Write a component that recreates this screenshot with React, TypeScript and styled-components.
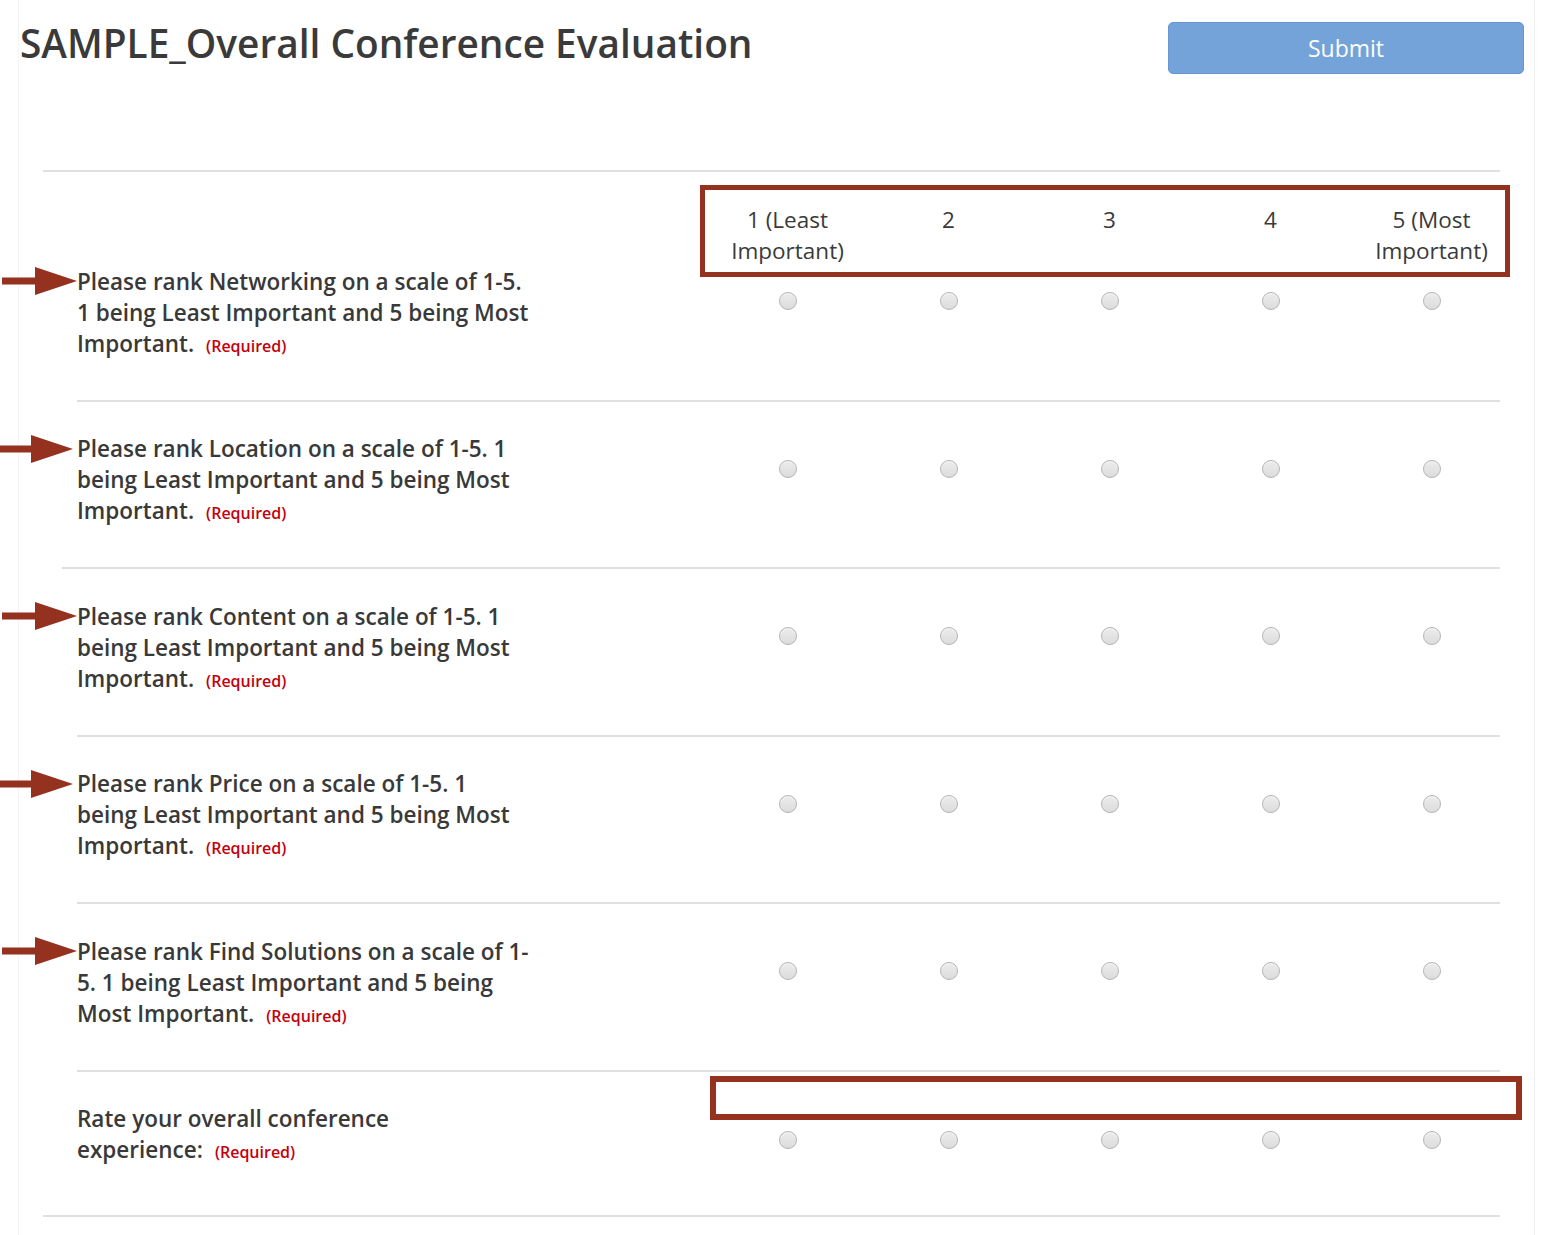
import React from 'react';
import styled, { createGlobalStyle } from 'styled-components';

const GlobalStyle = createGlobalStyle`
	html, body {
		margin: 0;
		padding: 0;
		background: #fff;
	}
	body {
		font-family: 'Open Sans', 'Liberation Sans', sans-serif;
		color: #333;
	}
`;

const ANNOTATION = '#95311f';

const Frame = styled.div`
	width: 1517px;
	min-height: 1235px;
	margin-left: 18px;
	box-sizing: border-box;
	border-left: 1px solid #f4f4f4;
	border-right: 1px solid #efefef;
`;

const TopBar = styled.header`
	display: flex;
	justify-content: space-between;
	align-items: flex-start;
	padding: 0 10px 0 1px;
`;

const Title = styled.h1`
	margin: 0;
	padding-top: 20px;
	font-size: 38.8px;
	line-height: 46px;
	font-weight: 600;
	color: #3a3a3a;
`;

const SubmitButton = styled.button`
	margin-top: 22px;
	width: 356px;
	height: 52px;
	background: #74a3da;
	border: 1px solid #6796d3;
	border-radius: 5px;
	color: #fff;
	font-family: inherit;
	font-size: 23px;
	cursor: pointer;
`;

const Table = styled.section`
	margin: 96px 0 0 24px;
	width: 1469px;
`;

const Divider = styled.div<{ $from: number }>`
	height: 2px;
	background: #e0e0e0;
	margin-left: ${(p) => p.$from - 43}px;
	margin-right: 12px;
`;

const Row = styled.div`
	position: relative;
	display: grid;
	grid-template-columns: 664px repeat(5, 161px);
`;

const HeaderCell = styled.div`
	padding-top: 31.5px;
	text-align: center;
	font-size: 22.5px;
	line-height: 31px;
	color: #3a3a3a;
`;

const Label = styled.div<{ $top: number; $bottom: number }>`
	position: relative;
	padding: ${(p) => p.$top}px 0 ${(p) => p.$bottom}px 34px;
	font-size: 22.5px;
	line-height: 31px;
	font-weight: 600;
	color: #393939;
	white-space: nowrap;
`;

const Line = styled.div`
	height: 31px;
`;

const Required = styled.span`
	margin-left: 12px;
	font-size: 16px;
	line-height: 1;
	font-weight: 600;
	color: #c3000c;
`;

const RadioCell = styled.div<{ $top: number }>`
	display: flex;
	justify-content: center;
	align-items: flex-start;
	padding-top: ${(p) => p.$top}px;
`;

const Radio = styled.span`
	width: 18px;
	height: 18px;
	box-sizing: border-box;
	border-radius: 50%;
	border: 1.5px solid #b3b3b3;
	background: linear-gradient(#ececec, #dcdcdc);
	box-shadow: inset 0 1px 1px rgba(255, 255, 255, 0.7);
`;

const Highlight = styled.div<{ $top: number; $left: number; $right: number; $height: number; $width: number }>`
	position: absolute;
	top: ${(p) => p.$top}px;
	left: ${(p) => p.$left}px;
	right: ${(p) => p.$right}px;
	height: ${(p) => p.$height}px;
	border: ${(p) => p.$width}px solid ${ANNOTATION};
	box-sizing: border-box;
	pointer-events: none;
`;

const ArrowMark = styled.svg<{ $tip: number; $top: number }>`
	position: absolute;
	left: ${(p) => p.$tip - 75 - 43}px;
	top: ${(p) => p.$top + 1.5}px;
`;

const Arrow = ({ tip, top }: { tip: number; top: number }) => (
	<ArrowMark $tip={tip} $top={top} width="75" height="28" viewBox="0 0 75 28">
		<rect x="0" y="10.5" width="36" height="7" fill={ANNOTATION} />
		<polygon points="33,0 75,14 33,28" fill={ANNOTATION} />
	</ArrowMark>
);

type Question = {
	lines: string[];
	arrow?: number;
};

const questions: Question[] = [
	{
		lines: ['Please rank Networking on a scale of 1-5.', '1 being Least Important and 5 being Most', 'Important.'],
		arrow: 77,
	},
	{
		lines: ['Please rank Location on a scale of 1-5. 1', 'being Least Important and 5 being Most', 'Important.'],
		arrow: 73,
	},
	{
		lines: ['Please rank Content on a scale of 1-5. 1', 'being Least Important and 5 being Most', 'Important.'],
		arrow: 77,
	},
	{
		lines: ['Please rank Price on a scale of 1-5. 1', 'being Least Important and 5 being Most', 'Important.'],
		arrow: 73,
	},
	{
		lines: ['Please rank Find Solutions on a scale of 1-', '5. 1 being Least Important and 5 being', 'Most Important.'],
		arrow: 77,
	},
	{
		lines: ['Rate your overall conference', 'experience:'],
	},
];

const dividerStarts = [77, 62, 77, 77, 77];

const scale = [
	['1 (Least', 'Important)'],
	['2'],
	['3'],
	['4'],
	['5 (Most', 'Important)'],
];

const LabelText = ({ lines }: { lines: string[] }) => (
	<>
		{lines.map((line, i) => (
			<Line key={i}>
				{line}
				{i === lines.length - 1 && <Required>(Required)</Required>}
			</Line>
		))}
	</>
);

const Radios = ({ top }: { top: number }) => (
	<>
		{[1, 2, 3, 4, 5].map((n) => (
			<RadioCell key={n} $top={top}>
				<Radio />
			</RadioCell>
		))}
	</>
);

export default function App() {
	return (
		<>
			<GlobalStyle />
			<Frame>
				<TopBar>
					<Title>SAMPLE_Overall Conference Evaluation</Title>
					<SubmitButton>Submit</SubmitButton>
				</TopBar>

				<Table>
					<Divider $from={43} />
					<Row>
						<div />
						{scale.map((lines, i) => (
							<HeaderCell key={i}>
								{lines.map((l, j) => (
									<div key={j}>{l}</div>
								))}
							</HeaderCell>
						))}
						<Highlight $top={13} $left={657} $right={2} $height={92} $width={5} />
					</Row>

					{questions.map((q, i) => {
						const first = i === 0;
						const last = i === questions.length - 1;
						const top = first ? 0 : 31.5;
						const bottom = last ? 49.5 : 41;
						return (
							<React.Fragment key={i}>
								{!first && <Divider $from={dividerStarts[i - 1]} />}
								<Row>
									<Label $top={top} $bottom={bottom}>
										{q.arrow && <Arrow tip={q.arrow} top={top} />}
										<LabelText lines={q.lines} />
									</Label>
									<Radios top={top + (last ? 27.5 : 26.5)} />
									{last && <Highlight $top={4} $left={667} $right={-10} $height={44} $width={6} />}
								</Row>
							</React.Fragment>
						);
					})}
					<Divider $from={43} />
				</Table>
			</Frame>
		</>
	);
}
